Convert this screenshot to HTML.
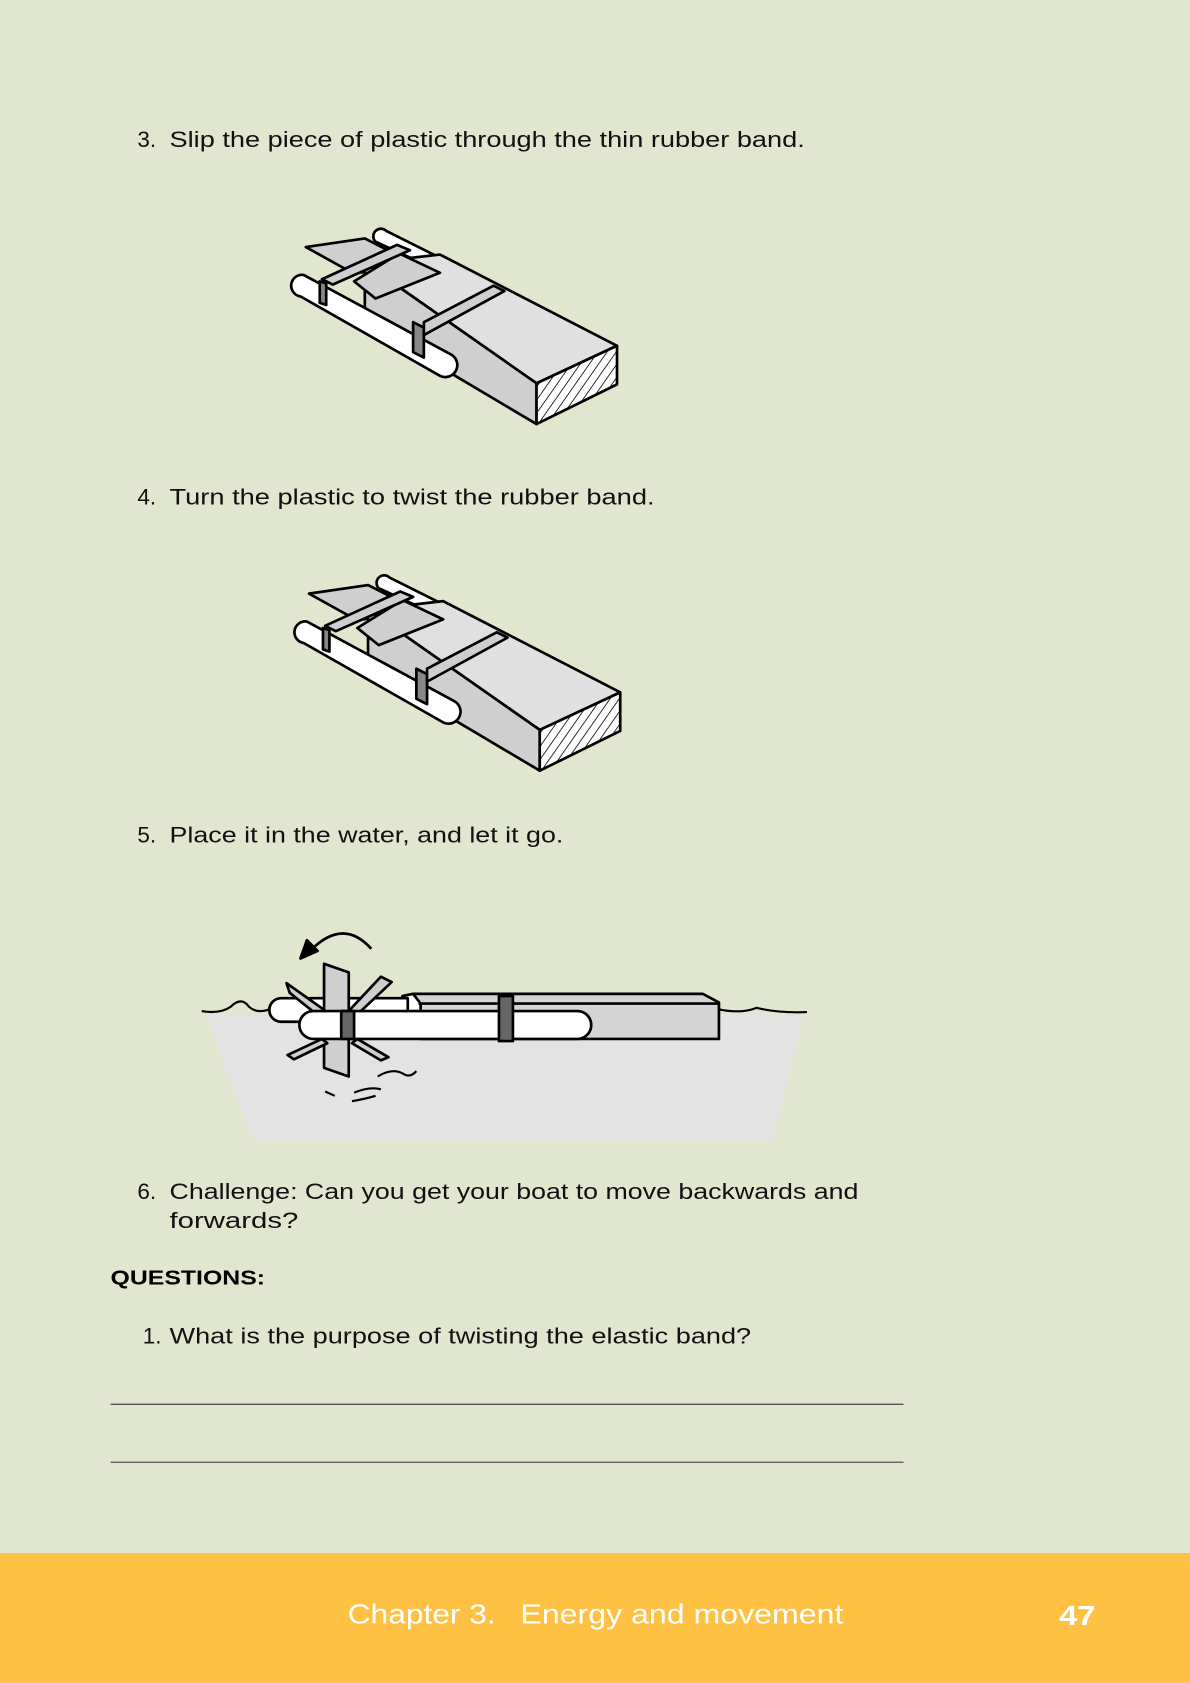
<!DOCTYPE html>
<html><head><meta charset="utf-8"><style>
html,body{margin:0;padding:0;background:#e1e6cf;}
svg{display:block}
text{font-family:"Liberation Sans",sans-serif;}
</style></head><body>
<svg width="1190" height="1683" viewBox="0 0 1109 1568" xmlns="http://www.w3.org/2000/svg">
<defs>
<pattern id="h" width="7" height="7" patternUnits="userSpaceOnUse" patternTransform="rotate(35)">
<rect width="7" height="7" fill="#fff"/><line x1="0" y1="0" x2="0" y2="7" stroke="#000" stroke-width="1.5"/>
</pattern>
<g id="blk" stroke="#000" stroke-width="2.5" stroke-linejoin="round">
<path d="M360 215 L430 250 L430 262 L350 225 A7 7 0 0 1 360 215Z" fill="#fff"/>
<path d="M285 230 L340 222 L385 245 L330 255Z" fill="#cfcfcf"/>
<path d="M340 245 L410 237 L575 322 L500 357Z" fill="#e0e0e0"/>
<path d="M340 245 L500 357 L500 395 L340 300Z" fill="#cfcfcf"/>
<path d="M500 357 L575 322 L575 358 L500 395Z" fill="url(#h)"/>
<path d="M283 256 L420 330 A10 10 0 0 1 410 350 L280 276 A10 10 0 0 1 283 256Z" fill="#fff"/>
<path d="M298 262 L304 264 L304 284 L298 282Z" fill="#888"/>
<path d="M385 300 L395 305 L395 333 L385 328Z" fill="#888"/>
<path d="M395 300 L460 266 L470 271 L395 312Z" fill="#cfcfcf"/>
<path d="M330 262 L372 236 L410 254 L350 278Z" fill="#cfcfcf"/>
<path d="M300 260 L370 228 L382 233 L310 265Z" fill="#cfcfcf"/>
</g>
</defs>

<g font-size="21" fill="#111">
<text x="128" y="137">3.</text>
<text x="158" y="137" textLength="592" lengthAdjust="spacingAndGlyphs">Slip the piece of plastic through the thin rubber band.</text>
<text x="128" y="470">4.</text>
<text x="158" y="470" textLength="452" lengthAdjust="spacingAndGlyphs">Turn the plastic to twist the rubber band.</text>
<text x="128" y="785">5.</text>
<text x="158" y="785" textLength="367" lengthAdjust="spacingAndGlyphs">Place it in the water, and let it go.</text>
<text x="128" y="1117">6.</text>
<text x="158" y="1117" textLength="642" lengthAdjust="spacingAndGlyphs">Challenge: Can you get your boat to move backwards and</text>
<text x="158" y="1144" textLength="120" lengthAdjust="spacingAndGlyphs">forwards?</text>
<text x="133" y="1252">1.</text>
<text x="158" y="1252" textLength="542" lengthAdjust="spacingAndGlyphs">What is the purpose of twisting the elastic band?</text>
</g>
<use href="#blk"/>
<use href="#blk" transform="translate(3,323)"/>

<g stroke="#000" stroke-width="2.5" stroke-linejoin="round">
<path d="M192 945 L750 945 L720 1062 L235 1062Z" fill="#e3e3e3" stroke="none"/>
<path d="M188 942 Q205 945 215 938 Q225 928 232 938 Q240 945 252 940" fill="none" stroke-width="2"/>
<path d="M668 940 Q690 945 705 939 Q725 944 752 943" fill="none" stroke-width="2"/>
<path d="M385 926 L655 926 L670 934 L670 968 L392 968Z" fill="#d4d4d4"/>
<path d="M375 928 L385 926 L392 935 L392 945 L375 945Z" fill="#fff"/>
<path d="M390 935 L670 935" fill="none"/>
<path d="M262 930 L380 930 L380 952 L262 952 A11 11 0 0 1 262 930Z" fill="#fff"/>
<path d="M267 916 L312 948 L305 953 L270 925Z" fill="#cfcfcf"/>
<path d="M302 898 L325 906 L325 1003 L302 995Z" fill="#cfcfcf"/>
<path d="M365 915 L330 948 L323 944 L355 910Z" fill="#cfcfcf"/>
<path d="M292 942 L538 942 A12 12 0 0 1 538 968 L292 968 A13 13 0 0 1 292 942Z" fill="#fff"/>
<path d="M318 942 L330 942 L330 968 L318 968Z" fill="#666"/>
<path d="M465 928 L478 928 L478 970 L465 970Z" fill="#666"/>
<path d="M300 968 L268 983 L274 987 L305 972Z" fill="#cfcfcf"/>
<path d="M333 968 L362 985 L355 988 L328 972Z" fill="#cfcfcf"/>
<path d="M346 884 Q320 855 290 885" fill="none"/>
<path d="M280 893 L286 876 L296 886Z" fill="#000"/>
<path d="M352 1003 Q365 995 375 1000 Q382 1005 388 998 M330 1018 Q345 1012 355 1015 M303 1017 L312 1021 M328 1026 Q340 1024 350 1021" fill="none" stroke-width="2"/>
</g>

<text x="103" y="1197" font-size="19" font-weight="bold" fill="#000" textLength="144" lengthAdjust="spacingAndGlyphs">QUESTIONS:</text>
<line x1="103" y1="1308.5" x2="842" y2="1308.5" stroke="#555" stroke-width="1.2"/>
<line x1="103" y1="1362.5" x2="842" y2="1362.5" stroke="#555" stroke-width="1.2"/>

<rect x="0" y="1447" width="1109" height="121" fill="#fec143"/>
<text x="324" y="1513" font-size="26" fill="#fff" textLength="138" lengthAdjust="spacingAndGlyphs">Chapter 3.</text>
<text x="485" y="1513" font-size="26" fill="#fff" textLength="301" lengthAdjust="spacingAndGlyphs">Energy and movement</text>
<text x="987" y="1514" font-size="26" font-weight="bold" fill="#fff" textLength="34" lengthAdjust="spacingAndGlyphs">47</text>
</svg>
</body></html>
